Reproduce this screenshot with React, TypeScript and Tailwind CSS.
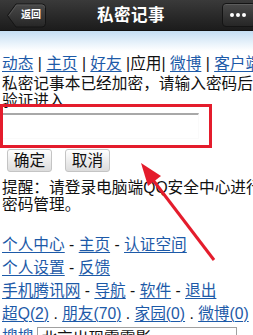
import React from 'react';

const font = { fontFamily: '"Liberation Sans", "Noto Sans CJK SC", sans-serif' };

function A({ children }: { children: React.ReactNode }) {
  return <a className="text-[#1d5aa8] underline decoration-1 underline-offset-2">{children}</a>;
}

function BackButton() {
  return (
    <div className="relative ml-[7px] w-[39px] h-[25px] flex items-center justify-end pr-[5px]">
      <svg className="absolute inset-0" width="39" height="25" viewBox="0 0 39 25">
        <defs>
          <linearGradient id="bk" x1="0" y1="0" x2="0" y2="1">
            <stop offset="0" stopColor="#4a4a4a" />
            <stop offset="1" stopColor="#262626" />
          </linearGradient>
        </defs>
        <path d="M0.5 12.5 L9 1 H35 Q38.5 1 38.5 4.5 V20.5 Q38.5 24 35 24 H9 Z" fill="url(#bk)" stroke="#141414" />
        <path d="M2 12.5 L9.6 2 H35 Q37.5 2 37.5 4.5" fill="none" stroke="#5c5c5c" strokeWidth="0.8" />
      </svg>
      <span className="relative text-white text-[10px] font-bold leading-none">返回</span>
    </div>
  );
}

function MoreButton() {
  return (
    <div className="w-[34px] h-[24px] -mr-[3px] rounded-[4px] border border-[#141414] bg-gradient-to-b from-[#4a4a4a] to-[#262626] shadow-[inset_0_1px_0_#5c5c5c] flex items-center justify-center gap-[2px] pr-[3px]">
      <span className="w-[4px] h-[4px] rounded-full bg-white" />
      <span className="w-[4px] h-[4px] rounded-full bg-white" />
      <span className="w-[4px] h-[4px] rounded-full bg-white" />
    </div>
  );
}

export default function App() {
  return (
    <div className="relative w-[253px] h-[335px] overflow-hidden bg-white text-[#111] text-[15.7px]" style={font}>
      <header className="h-[31px] flex items-center bg-gradient-to-b from-[#3a3a3a] to-[#1c1c1c] border-b border-[#111]">
        <BackButton />
        <div className="flex-1 text-center pr-[6px] text-white text-[16.5px] font-bold tracking-[0.5px]">私密记事</div>
        <MoreButton />
      </header>
      <div className="h-[20px] bg-gradient-to-b from-[#c4def3] to-white" />

      <div className="px-[2px] pt-[3px]">
        <div className="leading-[20px] whitespace-nowrap">
          <A>动态</A> | <A>主页</A> | <A>好友</A> |应用| <A>微博</A> | <A>客户端</A>
        </div>
        <div className="leading-[17px] mt-[1px] whitespace-nowrap">私密记事本已经加密，请输入密码后</div>
        <div className="leading-[17px]">验证进入</div>
        <input
          type="password"
          className="block mt-[4px] w-[197px] h-[26px] border border-[#fafafa] border-t-2 border-t-[#a8a8a8] outline-none"
        />
        <div className="flex gap-[13px] mt-[10px] ml-[5px]">
          <button className="w-[45px] h-[23px] rounded-[3px] border border-[#c4c4c4] bg-gradient-to-b from-white to-[#dcdcdc] text-[15.7px] leading-none text-[#111]">确定</button>
          <button className="w-[45px] h-[23px] rounded-[3px] border border-[#c4c4c4] bg-gradient-to-b from-white to-[#dcdcdc] text-[15.7px] leading-none text-[#111]">取消</button>
        </div>
        <div className="leading-[17px] mt-[7px] whitespace-nowrap">提醒：请登录电脑端QQ安全中心进行</div>
        <div className="leading-[17px]">密码管理。</div>

        <div className="mt-[20px] leading-[23px] whitespace-nowrap">
          <div><A>个人中心</A> - <A>主页</A> - <A>认证空间</A></div>
          <div><A>个人设置</A> - <A>反馈</A></div>
          <div><A>手机腾讯网</A> - <A>导航</A> - <A>软件</A> - <A>退出</A></div>
          <div><A>超Q(2)</A> . <A>朋友(70)</A> . <A>家园(0)</A> . <A>微博(0)</A></div>
          <div className="flex items-start gap-[4px]">
            <A>搜搜</A>
            <div className="mt-[2px] w-[200px] h-[24px] border border-[#a0a0a0] px-[3px] leading-[22px]">北京出现雾霾影</div>
          </div>
        </div>
      </div>

      <div className="absolute left-0 top-[104px] w-[212px] h-[44px] border-[3px] border-[#e41c2c]" />
      <svg className="absolute inset-0 pointer-events-none" width="253" height="335" viewBox="0 0 253 335">
        <line x1="153" y1="180" x2="214" y2="260" stroke="#e41c2c" strokeWidth="3" />
        <polygon points="141,163 161,176 148,186" fill="#e41c2c" />
      </svg>
    </div>
  );
}
